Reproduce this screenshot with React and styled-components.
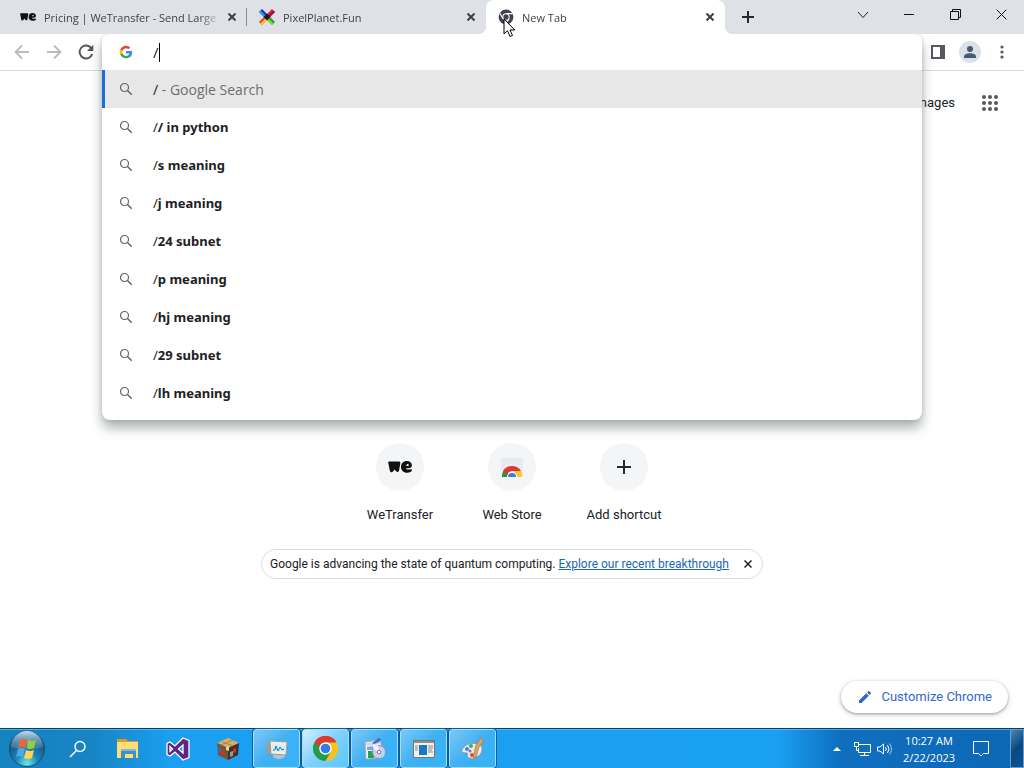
import React from "react";
import styled, { createGlobalStyle, css } from "styled-components";

const ui = '"Open Sans", "Noto Sans", sans-serif';
const web = 'Roboto, "Liberation Sans", sans-serif';

const Global = createGlobalStyle`
  * { box-sizing: border-box; }
  body { margin: 0; background: #fff; font-family: ${ui}; color: #202124; }
  button { font: inherit; color: inherit; background: none; border: 0; padding: 0; cursor: default; }
  svg { display: block; flex: none; }
`;

const Desktop = styled.div`
  display: flex;
  flex-direction: column;
  min-height: 100vh;
`;

const TabStrip = styled.header`
  display: flex;
  height: 34px;
  padding-left: 8px;
  background: #dee1e6;
`;

const TabItem = styled.div`
  position: relative;
  display: flex;
  align-items: center;
  flex: 0 1 239px;
  min-width: 0;
  padding: 0 7px 0 12px;
  border-radius: 8px 8px 0 0;
  background: ${(p) => (p.$active ? "#fff" : "transparent")};
  ${(p) =>
    p.$divider &&
    css`
      &::after {
        content: "";
        position: absolute;
        right: 0;
        top: 8px;
        width: 1px;
        height: 18px;
        background: #8a8d91;
      }
    `}
  ${(p) =>
    p.$active &&
    css`
      &::before,
      &::after {
        content: "";
        position: absolute;
        bottom: 0;
        width: 8px;
        height: 8px;
      }
      &::before { left: -8px; background: radial-gradient(circle at 0 0, transparent 8px, #fff 8px); }
      &::after { right: -8px; background: radial-gradient(circle at 100% 0, transparent 8px, #fff 8px); }
    `}
`;

const TabTitle = styled.button`
  flex: 1;
  min-width: 0;
  height: 34px;
  margin: 0 0 0 8px;
  overflow: hidden;
  white-space: nowrap;
  text-align: left;
  font-size: 11px;
  color: #3f4347;
  mask-image: linear-gradient(to right, #000 86%, rgba(0, 0, 0, 0.2) 96%);
`;

const IconButton = styled.button`
  display: grid;
  place-items: center;
  flex: none;
  width: ${(p) => p.$size || 16}px;
  height: ${(p) => p.$size || 16}px;
`;

const NewTabButton = styled(IconButton)`
  margin: 3px 0 0 9px;
`;

const WindowControls = styled.div`
  display: flex;
  margin-left: auto;
`;

const WindowButton = styled.button`
  display: grid;
  place-items: center;
  width: 46px;
  height: 29px;
`;

const Toolbar = styled.div`
  display: grid;
  grid-template-columns: 102px 1fr 102px;
  height: 37px;
  border-bottom: 1px solid #d8dadd;
`;

const NavGroup = styled.nav`
  display: flex;
  align-items: center;
  gap: 8px;
  padding-left: 10px;
`;

const ToolGroup = styled.div`
  display: flex;
  align-items: center;
  gap: 8px;
  padding-left: 4px;
`;

const OmniboxSlot = styled.div`
  position: relative;
`;

const Omnibox = styled.div`
  position: absolute;
  z-index: 2;
  inset: 0 0 auto 0;
  padding-bottom: 8px;
  border-radius: 8px;
  background: #fff;
  box-shadow: 0 8px 12px rgba(60, 75, 75, 0.42), 0 0 4px rgba(60, 64, 67, 0.16);
  clip-path: inset(0 -24px -24px -24px);
`;

const OmniboxField = styled.label`
  display: flex;
  align-items: center;
  height: 36px;
  padding-left: 17px;
`;

const OmniboxInput = styled.input`
  flex: none;
  field-sizing: content;
  height: 28px;
  padding: 0;
  margin-left: 20px;
  border: 0;
  outline: 0;
  background: none;
  font: 15px ${ui};
  color: #202124;
  caret-color: transparent;
`;

const Caret = styled.span`
  width: 1px;
  height: 19px;
  background: #000;
`;

const Suggestions = styled.ul`
  margin: 0;
  padding: 0;
  list-style: none;
`;

const Suggestion = styled.li`
  display: flex;
  align-items: center;
  gap: 20px;
  height: 38px;
  padding-left: ${(p) => (p.$selected ? 14 : 17)}px;
  border-left: ${(p) => (p.$selected ? "3px solid #1a6fe0" : "0")};
  background: ${(p) => (p.$selected ? "#e7e7e7" : "transparent")};
  font-family: ${(p) => (p.$selected ? ui : '"Noto Sans", "Open Sans", sans-serif')};
  font-size: ${(p) => (p.$selected ? 14 : 13)}px;
  white-space: pre;
`;

const Muted = styled.span`
  color: #6b6e72;
`;

const Page = styled.main`
  display: flex;
  flex: 1;
  flex-direction: column;
  align-items: center;
  font-family: ${web};
  font-size: 13px;
  line-height: 16px;
`;

const PageHeader = styled.div`
  display: flex;
  align-items: center;
  align-self: stretch;
  justify-content: flex-end;
  gap: 23px;
  height: 64px;
  padding-right: 22px;
`;

const PageLink = styled.a`
  color: #202124;
  text-decoration: none;
`;

const Shortcuts = styled.div`
  display: flex;
  margin-top: 296px;
`;

const ShortcutTile = styled.a`
  display: flex;
  flex-direction: column;
  align-items: center;
  gap: 16px;
  width: 112px;
  padding-top: 12px;
  color: #202124;
  text-decoration: none;
`;

const ShortcutIcon = styled.span`
  display: grid;
  place-items: center;
  width: 48px;
  height: 48px;
  border-radius: 50%;
  background: #f3f5f6;
`;

const Promo = styled.div`
  display: flex;
  align-items: center;
  height: 30px;
  margin-top: 26px;
  padding: 0 6px 0 8px;
  border: 1px solid #dadce0;
  border-radius: 15px;
  font-size: 12px;
  white-space: pre;
`;

const PromoLink = styled.a`
  margin-right: 11px;
  color: #1967b8;
`;

const Customize = styled.button`
  display: flex;
  align-items: center;
  align-self: flex-end;
  gap: 8px;
  height: 32px;
  margin: auto 16px 15px 0;
  padding: 0 16px;
  border-radius: 16px;
  background: #fff;
  box-shadow: 0 1px 3px rgba(60, 64, 67, 0.45), 0 2px 6px rgba(60, 64, 67, 0.15);
  color: #3367c8;
`;

const Taskbar = styled.footer`
  display: flex;
  height: 40px;
  border-top: 1px solid #0a3c64;
  background: linear-gradient(to right, #1583bf 0, #1784c4 90px, #1b9ff0 170px, #1aa0f2 76%, #0f6fbe 82%, #0d68b5 100%);
  box-shadow: inset 0 1px 0 rgba(140, 215, 255, 0.5);
  color: #fff;
`;

const TaskButton = styled.button`
  display: grid;
  place-items: center;
  width: ${(p) => p.$width || 50}px;
`;

const RunningApps = styled.div`
  display: flex;
  gap: 2px;
`;

const RunningButton = styled.button`
  display: grid;
  place-items: center;
  width: 47px;
  border: 1px solid #9fe0ff;
  border-radius: 3px;
  outline: 1px solid #0c5c98;
  background: ${(p) =>
    p.$active
      ? "linear-gradient(135deg, #d3effd, #7fd0fa 50%, #5cc6fb)"
      : "linear-gradient(135deg, #7cc9f5, #3fb0f3 50%, #35b4fa)"};
`;

const Tray = styled.div`
  display: flex;
  align-items: center;
  gap: 7px;
  margin-left: auto;
`;

const TrayArrow = styled.button`
  margin-right: 6px;
`;

const Clock = styled.time`
  width: 58px;
  margin-right: 4px;
  text-align: center;
  font-size: 11px;
  line-height: 17px;
  white-space: nowrap;
`;

const ShowDesktop = styled.button`
  align-self: stretch;
  width: 14px;
  margin-left: 10px;
  border: 1px solid #5fa0cf;
  background: linear-gradient(135deg, #4b86b4, #0c477f 50%, #0b5596);
`;

const Cross = ({ size = 8, width = 2, color = "#3c4043" }) => (
  <svg width={size} height={size} viewBox="0 0 8 8" stroke={color} strokeWidth={width} fill="none">
    <path d="M.5.5l7 7M7.5.5l-7 7" vectorEffect="non-scaling-stroke" />
  </svg>
);

const Plus = ({ size = 12 }) => (
  <svg width={size} height={size} viewBox="0 0 12 12" stroke="#26282b" strokeWidth="2">
    <path d="M6 0v12M0 6h12" vectorEffect="non-scaling-stroke" />
  </svg>
);

const WeLogo = ({ width = 16 }) => (
  <svg width={width} height={width / 2} viewBox="0 0 24 12" fill="#111">
    <path d="M.2 1.500C.2.600.800.400 1.600.400h9C12 .400 12.400 1 12.300 2l-1.200 7.600c-.2 1.500-1.900 2-3 .7L6.500 8.400 5 10.600c-1 1.300-2.600.8-3.100-.6z" />
    <path d="M18.700 0c3.200 0 5.200 1.900 5.200 4.300 0 2-1.400 2.900-3.300 2.900h-2.500c.2 1 .9 1.400 2.100 1.400 1.100 0 2-.4 2.700-.4.600 0 1 .4 1 1 0 1.400-2.300 2.500-4.800 2.500-3.600 0-6.100-2.400-6.100-5.800C13 2.400 15.400 0 18.700 0zm-.3 4.900h1.500c.6 0 .9-.3.900-.7 0-.7-.5-1.100-1.200-1.100-.8 0-1.200.7-1.200 1.800z" fillRule="evenodd" />
  </svg>
);

const PixelX = () => (
  <svg width="16" height="16" viewBox="0 0 16 16">
    <path d="M0 3l3-3 5 5-3 3z" fill="#1c2bc4" />
    <path d="M0 3l1.500-1.500L6.500 6.500 5 8z" fill="#27a6e0" />
    <path d="M8 5l5-5 3 3-5 5z" fill="#e0202c" />
    <path d="M9.500 6.500l5-5L16 3l-5 5z" fill="#a0104e" />
    <path d="M5 8l3 3-5 5-3-3z" fill="#f0401c" />
    <path d="M6.500 9.500L8 11l-5 5-1.500-1.500z" fill="#ffd21a" />
    <path d="M11 8l5 5-3 3-5-5z" fill="#1aa53a" />
    <path d="M9.500 9.500l5 5L13 16l-5-5z" fill="#8ed32c" />
    <path d="M8 4.500L11.500 8 8 11.500 4.500 8z" fill="#1a1726" />
  </svg>
);

const ChromeMono = () => (
  <svg width="16" height="16" viewBox="-1 -1 26 26">
    <circle cx="12" cy="12" r="12" fill="#3f454b" />
    <circle cx="12" cy="12" r="6" fill="#fff" />
    <path d="M12 6.500h11M7.200 14.700L1.800 5.400M16.800 14.700l-5.500 9.500" stroke="#fff" strokeWidth="1.800" />
    <circle cx="12" cy="12" r="4.300" fill="#3f454b" />
  </svg>
);

const ChromeColor = () => (
  <svg width="25" height="25" viewBox="0 0 48 48">
    <path d="M24 24L3.200 12A24 24 0 0 1 44.800 12z" fill="#dc3a2d" />
    <path d="M24 24L44.800 12A24 24 0 0 1 24 48z" fill="#fbc116" />
    <path d="M24 24v24A24 24 0 0 1 3.200 12z" fill="#249b4a" />
    <path d="M24 12h20.800L34.400 30z" fill="#fbc116" />
    <path d="M34.400 30L24 48l-8-15z" fill="#249b4a" />
    <path d="M13.600 30L3.200 12 24 12z" fill="#249b4a" />
    <path d="M3.200 12A24 24 0 0 1 44.800 12H24a12 12 0 0 0-12 9z" fill="#dc3a2d" />
    <path d="M13.600 30A12 12 0 0 0 24 36L17 47 3.200 12z" fill="#249b4a" />
    <circle cx="24" cy="24" r="12" fill="#fff" />
    <circle cx="24" cy="24" r="9.300" fill="#367cec" />
  </svg>
);

const GoogleG = () => (
  <svg width="14" height="14" viewBox="1 1 22 22">
    <path d="M21.600 12.200c0-.7-.1-1.300-.2-1.900H12v3.900h5.400a4.700 4.700 0 0 1-2 3v2.600h3.200c2-1.800 3-4.400 3-7.600z" fill="#4285f4" />
    <path d="M12 22c2.700 0 5-.9 6.600-2.400l-3.200-2.500a6 6 0 0 1-9-3.200H3.100v2.600A10 10 0 0 0 12 22z" fill="#34a853" />
    <path d="M6.400 13.900a6 6 0 0 1 0-3.800V7.500H3.100a10 10 0 0 0 0 9z" fill="#fbbc05" />
    <path d="M12 6c1.500 0 2.800.5 3.800 1.500l2.900-2.900A10 10 0 0 0 3.100 7.500l3.300 2.600A6 6 0 0 1 12 6z" fill="#ea4335" />
  </svg>
);

const SearchGlyph = () => (
  <svg width="14" height="14" viewBox="0 0 14 14" fill="none" stroke="#5f6368">
    <circle cx="5.500" cy="5.500" r="4" strokeWidth="1.200" />
    <path d="M8.500 8.500l4.200 4.200" strokeWidth="1.500" />
  </svg>
);

const Arrow = ({ flip }) => (
  <svg width="16" height="16" viewBox="0 0 16 16" fill="none" stroke="#b9bbbe" strokeWidth="1.800">
    <path d={flip ? "M1 8h13M8 1.500L14.500 8 8 14.500" : "M15 8H2M8 1.500L1.500 8 8 14.500"} />
  </svg>
);

const Reload = () => (
  <svg width="24" height="24" viewBox="0 0 24 24" fill="#505458">
    <path d="M17.300 6.700A7.400 7.400 0 1 0 19.200 14h-2A5.500 5.500 0 1 1 16 8.100L13 11h6.300V4.700z" />
  </svg>
);

const Cursor = styled.svg`
  position: fixed;
  z-index: 5;
  left: 503px;
  top: 18px;
  pointer-events: none;
`;

const Explorer = () => (
  <svg width="24" height="22" viewBox="0 0 24 22">
    <path d="M1 1h9l2 2h10v3H1z" fill="#e09a27" />
    <path d="M1 4h21v16H1z" fill="#ffdc76" />
    <path d="M5 12h15v8h-3v-4H9v4H5z" fill="#3d91cb" />
    <path d="M5 11h15v2H5z" fill="#80b9d6" />
  </svg>
);

const VisualStudio = () => (
  <svg width="24" height="24" viewBox="0 0 24 24">
    <path fillRule="evenodd" d="M17 1l6 2.500v17L17 23l-8-8-5 4-3-1.500v-11L4 5l5 4zM17 8l-4.500 4 4.500 4zM4 9.500v5L6.500 12z" fill="#5f2481" stroke="#fff" strokeWidth="1.300" />
  </svg>
);

const Crate = () => (
  <svg width="24" height="24" viewBox="0 0 24 24">
    <path d="M1 6l11-5 11 5-11 5z" fill="#d9ad65" />
    <path d="M1 6l11 5v12L2 18z" fill="#795337" />
    <path d="M12 11l11-5-1 12-10 5z" fill="#3d332d" />
    <path d="M10 10l3-1v5l-3-1z" fill="#f0d18e" />
    <path d="M2 10l3 1v5l-3-1z" fill="#2c7594" />
    <path d="M5 14l3-2v7l-3-1zM17 12l3-1v4l-3 1z" fill="#d43224" />
    <path d="M14 15l3-1v5l-3 1z" fill="#9c978c" />
    <path d="M7 5l10 4M5 8l12-5" stroke="#b7803f" />
  </svg>
);

const Monitor = () => (
  <svg width="24" height="22" viewBox="0 0 24 22">
    <ellipse cx="14" cy="18" rx="6" ry="3" fill="#b8c2cc" />
    <path d="M1 6l5-3v14l-4-2z" fill="#a09d94" />
    <path d="M5 3l17 1-1 13-15-1z" fill="#eef0e9" stroke="#9aa19f" />
    <path d="M7 6l13 1v7L8 13z" fill="#d4eff4" />
    <path d="M8 12h2l1-4 2 5 2-4 2 3 2-1" fill="none" stroke="#2374a3" />
  </svg>
);

const Installer = () => (
  <svg width="24" height="24" viewBox="0 0 24 24">
    <path d="M2 5l14-2 2 3v15L3 22z" fill="#f1f5f7" stroke="#9fb0ba" />
    <path d="M3 6l13-2 1 3-14 2z" fill="#cfdbe2" />
    <path d="M5 14h6v7H5z" fill="#24a345" />
    <path d="M4 10l6-1v4H4z" fill="#7fa6e6" />
    <circle cx="16" cy="15" r="6.500" fill="#cfcdf0" stroke="#8f8dbd" />
    <path d="M16 15l-6-3a7 7 0 0 1 5-4z" fill="#f6f1fe" />
    <path d="M16 15l6 3-3 3z" fill="#a0e1e5" />
    <circle cx="16" cy="15" r="1.800" fill="#fff" stroke="#7775a8" />
    <path d="M9 6l7-5 2 1-2 3-5 2z" fill="#4a68c0" />
  </svg>
);

const AppWindow = () => (
  <svg width="22" height="18" viewBox="0 0 22 18">
    <path d="M.5.500h21v17H.5z" fill="#f6f3eb" stroke="#77746e" />
    <path d="M1 1h20v2H1z" fill="#8e918f" />
    <path d="M6 5h8v10H6z" fill="#1878c4" />
    <path d="M2 6h3M2 8h3M2 10h3M15 6h5M15 8h5M15 10h4M15 12h5" stroke="#86888a" />
  </svg>
);

const Palette = () => (
  <svg width="25" height="24" viewBox="0 0 25 24">
    <path d="M2 13C4 8 11 5 18 7c4 1 5 5 3 9s-8 6-12 5c-3-1 0-4-2-5s-6 1-5-3z" fill="#e9edf0" stroke="#8f9ca5" />
    <circle cx="7" cy="12" r="2" fill="#368ed0" />
    <circle cx="11" cy="9" r="2" fill="#49ac55" />
    <circle cx="12" cy="18" r="2" fill="#e0463a" />
    <circle cx="10" cy="14" r="1.500" fill="#a460c0" />
    <path d="M20 2c2-2 4 0 3 3l-4 5-3 11-3-1 3-12z" fill="#d7a362" stroke="#a47136" strokeWidth=".6" />
  </svg>
);

const StartOrb = () => (
  <svg width="38" height="38" viewBox="0 0 38 38">
    <defs>
      <radialGradient id="orb" cx=".5" cy=".9" r=".8">
        <stop offset="0" stopColor="#6ee6ec" />
        <stop offset=".4" stopColor="#1b83b5" />
        <stop offset="1" stopColor="#17477b" />
      </radialGradient>
      <linearGradient id="shine" x2="0" y2="1">
        <stop stopColor="#e6f4fa" stopOpacity=".85" />
        <stop offset="1" stopColor="#83b5d1" stopOpacity=".2" />
      </linearGradient>
    </defs>
    <circle cx="19" cy="19" r="17.500" fill="url(#orb)" stroke="#174d76" />
    <path d="M3 17A16 16 0 0 1 35 17q-15 5-32 0z" fill="url(#shine)" />
    <path d="M12 10q4-2 7 0l-2 8q-3-2-7 0z" fill="#ee6532" />
    <path d="M20 10q4 2 8 0l-2 8q-4 2-7 0z" fill="#9bcc3d" />
    <path d="M10 19q4-2 7 0l-2 8q-3-2-7 0z" fill="#4ba9e8" />
    <path d="M18 20q4 2 8 0l-2 8q-4 2-8 0z" fill="#ffd451" />
  </svg>
);

const tabs = [
  { title: "Pricing | WeTransfer - Send Large", icon: <WeLogo />, divider: true },
  { title: "PixelPlanet.Fun", icon: <PixelX /> },
  { title: "New Tab", icon: <ChromeMono />, active: true },
];

const completions = ["/ in python", "s meaning", "j meaning", "24 subnet", "p meaning", "hj meaning", "29 subnet", "lh meaning"];

const running = [
  { name: "Task Manager", icon: <Monitor /> },
  { name: "Google Chrome", icon: <ChromeColor />, active: true },
  { name: "Installer", icon: <Installer /> },
  { name: "Application", icon: <AppWindow /> },
  { name: "Paint", icon: <Palette /> },
];

export default function App() {
  return (
    <Desktop>
      <Global />
      <TabStrip>
        {tabs.map((t) => (
          <TabItem key={t.title} $active={t.active} $divider={t.divider}>
            {t.icon}
            <TabTitle>{t.title}</TabTitle>
            <IconButton aria-label={`Close ${t.title}`}><Cross /></IconButton>
          </TabItem>
        ))}
        <NewTabButton $size={28} aria-label="New tab"><Plus /></NewTabButton>
        <WindowControls>
          <WindowButton aria-label="Search tabs">
            <svg width="12" height="8" fill="none" stroke="#222"><path d="M1 1l5 5.500L11 1" /></svg>
          </WindowButton>
          <WindowButton aria-label="Minimize">
            <svg width="10" height="1"><path d="M0 0h10v1H0z" fill="#111" /></svg>
          </WindowButton>
          <WindowButton aria-label="Restore">
            <svg width="11" height="11" fill="none" stroke="#111"><path d="M.5 2.500h8v8h-8zM2.500 2.500v-2h8v8h-2" /></svg>
          </WindowButton>
          <WindowButton aria-label="Close"><Cross size={11} width={1} color="#111" /></WindowButton>
        </WindowControls>
      </TabStrip>

      <Toolbar>
        <NavGroup>
          <IconButton $size={24} aria-label="Back"><Arrow /></IconButton>
          <IconButton $size={24} aria-label="Forward"><Arrow flip /></IconButton>
          <IconButton $size={24} aria-label="Reload"><Reload /></IconButton>
        </NavGroup>
        <OmniboxSlot>
          <Omnibox>
            <OmniboxField>
              <GoogleG />
              <OmniboxInput aria-label="Address and search bar" defaultValue="/" />
              <Caret />
            </OmniboxField>
            <Suggestions>
              <Suggestion $selected>
                <SearchGlyph />
                <span>/<Muted> - Google Search</Muted></span>
              </Suggestion>
              {completions.map((c) => (
                <Suggestion key={c}>
                  <SearchGlyph />
                  <span>/<b>{c}</b></span>
                </Suggestion>
              ))}
            </Suggestions>
          </Omnibox>
        </OmniboxSlot>
        <ToolGroup>
          <IconButton $size={24} aria-label="Side panel">
            <svg width="14" height="14"><path fillRule="evenodd" d="M0 0h14v14H0zM2 2v10h7V2z" fill="#55585c" /></svg>
          </IconButton>
          <IconButton $size={24} aria-label="Profile">
            <svg width="22" height="22">
              <circle cx="11" cy="11" r="11" fill="#dbe1e8" />
              <circle cx="11" cy="8" r="3" fill="#49586a" />
              <path d="M5 17v-1.500c0-4.500 12-4.500 12 0V17z" fill="#49586a" />
            </svg>
          </IconButton>
          <IconButton $size={24} aria-label="Menu">
            <svg width="4" height="14" fill="#55585c"><circle cx="2" cy="2" r="1.600" /><circle cx="2" cy="7" r="1.600" /><circle cx="2" cy="12" r="1.600" /></svg>
          </IconButton>
        </ToolGroup>
      </Toolbar>

      <Page>
        <PageHeader>
          <PageLink href="#images">Images</PageLink>
          <IconButton $size={24} aria-label="Google apps">
            <svg width="16" height="16" fill="#55585c">
              {[2, 8, 14].map((y) => [2, 8, 14].map((x) => <circle key={`${x}-${y}`} cx={x} cy={y} r="2" />))}
            </svg>
          </IconButton>
        </PageHeader>
        <Shortcuts>
          <ShortcutTile href="#wetransfer">
            <ShortcutIcon><WeLogo width={24} /></ShortcutIcon>
            WeTransfer
          </ShortcutTile>
          <ShortcutTile href="#store">
            <ShortcutIcon>
              <svg width="24" height="24" viewBox="0 0 24 24">
                <path d="M1 3h22v9l-2 10H3L1 12z" fill="#e8ebed" />
                <path d="M2 22a10 10 0 0 1 3-8l5 8z" fill="#23964c" />
                <path d="M3 16a10.500 10.500 0 0 1 18 0h-9a6 6 0 0 0-5 4z" fill="#d93a31" />
                <path d="M14 16h7a10 10 0 0 1 1 6h-6z" fill="#fcc72e" />
                <path d="M7 22a5 5 0 0 1 10 0z" fill="#fff" />
                <path d="M8 22a4 4 0 0 1 8 0z" fill="#4079df" />
              </svg>
            </ShortcutIcon>
            Web Store
          </ShortcutTile>
          <ShortcutTile as="button">
            <ShortcutIcon><Plus size={14} /></ShortcutIcon>
            Add shortcut
          </ShortcutTile>
        </Shortcuts>
        <Promo>
          <span>Google is advancing the state of quantum computing. </span>
          <PromoLink href="#quantum">Explore our recent breakthrough</PromoLink>
          <IconButton aria-label="Dismiss"><Cross size={8} width={1.5} color="#222" /></IconButton>
        </Promo>
        <Customize>
          <svg width="16" height="16" viewBox="0 0 16 16" fill="#2b66cf"><path d="M2 11.500V14h2.500l7.300-7.300-2.500-2.500zM13.800 4.700a.7.7 0 0 0 0-1L12.300 2.200a.7.7 0 0 0-1 0l-1.200 1.200 2.500 2.500z" /></svg>
          Customize Chrome
        </Customize>
      </Page>

      <Taskbar>
        <TaskButton $width={53} aria-label="Start"><StartOrb /></TaskButton>
        <TaskButton aria-label="Search">
          <svg width="18" height="18" fill="none" stroke="#fff" strokeWidth="1.400"><circle cx="11" cy="6.500" r="5" /><path d="M7.500 10.500L1 17" /></svg>
        </TaskButton>
        <TaskButton aria-label="File Explorer"><Explorer /></TaskButton>
        <TaskButton aria-label="Visual Studio"><VisualStudio /></TaskButton>
        <TaskButton aria-label="Crate"><Crate /></TaskButton>
        <RunningApps>
          {running.map((r) => (
            <RunningButton key={r.name} $active={r.active} aria-label={r.name}>{r.icon}</RunningButton>
          ))}
        </RunningApps>
        <Tray>
          <TrayArrow aria-label="Show hidden icons">
            <svg width="8" height="4" fill="#fff"><path d="M0 4l4-4 4 4z" /></svg>
          </TrayArrow>
          <IconButton aria-label="Network">
            <svg width="17" height="16" fill="none" stroke="#fff"><path d="M5 3.500h11.500v8H4.500V7M10.500 12v2.500M6 14.500h9M.5 1.500h4v4h-4zM2.500 6v3.500h2" /></svg>
          </IconButton>
          <IconButton aria-label="Volume">
            <svg width="16" height="14" fill="none" stroke="#fff"><path d="M.5 5v4H3l3.500 3V2L3 5zM8.500 5q1.500 2 0 4M10.500 3q3 4 0 8" /><path d="M12.500 1.500q4 5.500 0 11" opacity=".6" /></svg>
          </IconButton>
          <Clock dateTime="2023-02-22T10:27">10:27 AM<br />2/22/2023</Clock>
          <IconButton $size={24} aria-label="Notifications">
            <svg width="16" height="16" fill="none" stroke="#fff"><path d="M.5.500h15v12h-5L8 15l-2.500-2.500h-5z" /></svg>
          </IconButton>
          <ShowDesktop aria-label="Show desktop" />
        </Tray>
      </Taskbar>

      <Cursor width="13" height="20" viewBox="0 0 13 20">
        <path d="M1 1v15l3.500-3.300L7 18.500l2.500-1L7 12h4.800z" fill="#fff" stroke="#000" />
      </Cursor>
    </Desktop>
  );
}
